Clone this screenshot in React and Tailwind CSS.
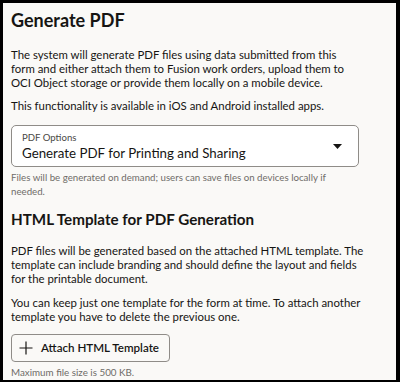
import React from 'react';

const font = { fontFamily: 'Lato, "Noto Sans", sans-serif' };

const App = () => {
    return (
        <div className="w-[400px] h-[382px] bg-black pt-[3px] pl-[3px] pr-[4px] pb-[2px]" style={font}>
            <div className="h-full bg-[#faf9f7] pl-[8px] pr-[24px] pt-[5px] text-[#161513] overflow-hidden">
                <h1 className="text-[18px] leading-[24px] font-bold">Generate PDF</h1>

                <p className="mt-[16px] text-[11.4px] leading-[14px]">
                    The system will generate PDF files using data submitted from this<br />
                    form and either attach them to Fusion work orders, upload them to<br />
                    OCI Object storage or provide them locally on a mobile device.
                </p>
                <p className="mt-[9px] text-[11.4px] leading-[14px]">
                    This functionality is available in iOS and Android installed apps.
                </p>

                <div className="mt-[12px] w-[348px] h-[42px] border border-[#8f8c88] rounded-[5px] bg-white flex items-center pl-[10px] pr-[16px]">
                    <div className="flex-1 flex flex-col">
                        <span className="text-[9.6px] leading-[13px] text-[#4a4845]">PDF Options</span>
                        <span className="text-[13.3px] leading-[18px]">Generate PDF for Printing and Sharing</span>
                    </div>
                    <svg width="9" height="5" viewBox="0 0 9 5">
                        <path d="M0 0 L9 0 L4.5 5 Z" fill="#161513" />
                    </svg>
                </div>
                <p className="mt-[3px] text-[9.7px] leading-[14px] text-[#6f6c68]">
                    Files will be generated on demand; users can save files on devices locally if<br />
                    needed.
                </p>

                <h2 className="mt-[10px] text-[15.2px] leading-[22px] font-bold">HTML Template for PDF Generation</h2>

                <p className="mt-[14px] text-[11.4px] leading-[14px]">
                    PDF files will be generated based on the attached HTML template. The<br />
                    template can include branding and should define the layout and fields<br />
                    for the printable document.
                </p>
                <p className="mt-[10px] text-[11.4px] leading-[13.5px]">
                    You can keep just one template for the form at time. To attach another<br />
                    template you have to delete the previous one.
                </p>

                <button className="mt-[11px] h-[28px] w-[159px] border border-[#8f8c88] rounded-[4px] bg-[#faf9f7] flex items-center pl-[7px] gap-[8px] whitespace-nowrap">
                    <svg width="14" height="14" viewBox="0 0 14 14">
                        <path d="M7 0.5 V13.5 M0.5 7 H13.5" stroke="#161513" strokeWidth="1.2" />
                    </svg>
                    <span className="text-[11.6px] font-semibold">Attach HTML Template</span>
                </button>
                <p className="mt-[3px] text-[9.8px] leading-[14px] text-[#6f6c68]">Maximum file size is 500 KB.</p>
            </div>
        </div>
    );
};

export default App;
